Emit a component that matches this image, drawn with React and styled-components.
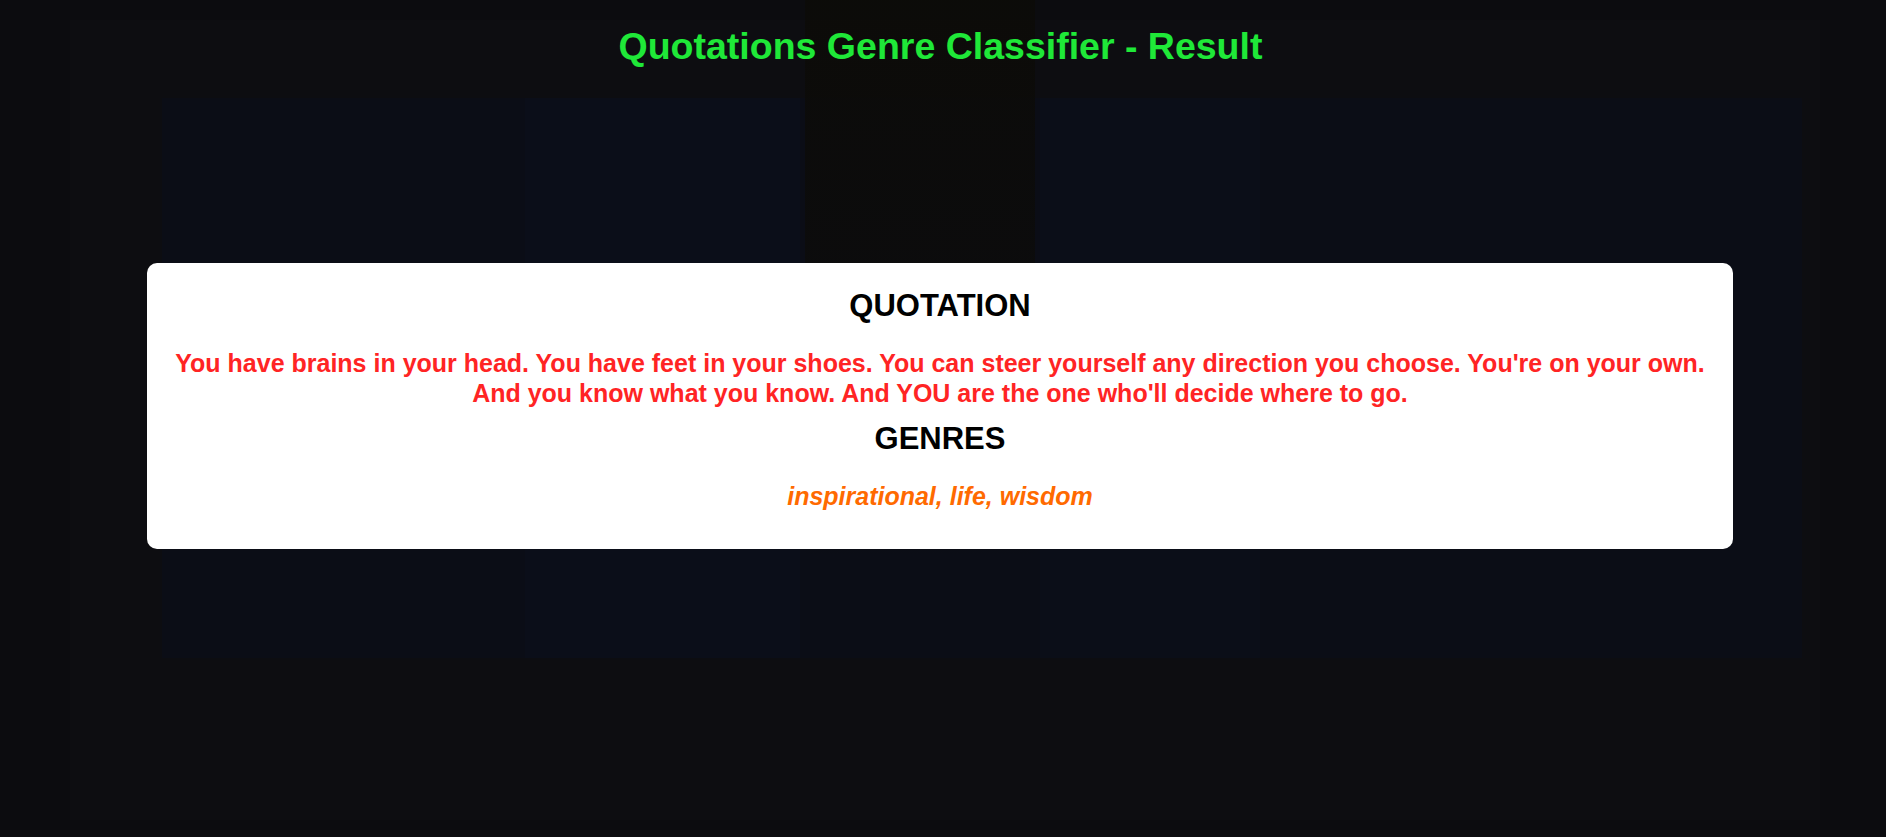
import React from "react";
import styled, { createGlobalStyle } from "styled-components";

const result = {
  quote:
    "You have brains in your head. You have feet in your shoes. You can steer yourself any direction you choose. You're on your own. And you know what you know. And YOU are the one who'll decide where to go.",
  genres: ["inspirational", "life", "wisdom"],
};

const GlobalStyle = createGlobalStyle`
  html, body {
    margin: 0;
    padding: 0;
  }
  body {
    background: #0c0c0f;
    font-family: "Liberation Sans", Arial, sans-serif;
  }
`;

const App = () => {
  return (
    <Page>
      <GlobalStyle />
      <Header>
        <Title>Quotations Genre Classifier - Result</Title>
      </Header>
      <Main>
        <Card>
          <Heading>QUOTATION</Heading>
          <Quote>{result.quote}</Quote>
          <Heading>GENRES</Heading>
          <Genres>{result.genres.join(", ")}</Genres>
        </Card>
      </Main>
    </Page>
  );
};

// blurred backdrop: a few soft blocks over a near-black base
const Page = styled.div`
  min-height: 837px;
  display: flex;
  flex-direction: column;
  background:
    linear-gradient(rgba(12, 11, 8, 0.9), rgba(12, 11, 8, 0.6) 70%, rgba(12, 11, 8, 0)) 805px 0 / 230px 560px no-repeat,
    linear-gradient(#0b0e19, #0b0e19) 525px 98px / 275px 560px no-repeat,
    linear-gradient(#0b0e18, #0b0e18) 1040px 98px / 220px 560px no-repeat,
    linear-gradient(#0b0d16, #0b0d16) 162px 98px / 1640px 560px no-repeat,
    linear-gradient(#0d0d11, #0d0d11) 70px 20px / 1750px 800px no-repeat,
    #0c0c0f;
`;

const Header = styled.header`
  height: 92px;
  display: flex;
  align-items: center;
  justify-content: center;
  padding-right: 5px;
`;

const Title = styled.h1`
  margin: 0;
  color: #1fe838;
  font-size: 37.5px;
  font-weight: 700;
`;

const Main = styled.main`
  display: flex;
  justify-content: center;
  padding-top: 171px;
`;

const Card = styled.section`
  width: 1586px;
  margin-right: 6px;
  box-sizing: border-box;
  background: #ffffff;
  border-radius: 10px;
  padding: 24px 20px 38px;
  text-align: center;
`;

const Heading = styled.h2`
  margin: 0;
  color: #000;
  font-size: 31px;
  font-weight: 700;
  line-height: 37px;
`;

const Quote = styled.p`
  margin: 24px 0 12px;
  color: #ff2424;
  font-size: 25px;
  font-weight: 700;
  line-height: 30px;
`;

const Genres = styled.p`
  margin: 25px 0 0;
  color: #ff6a00;
  font-size: 25px;
  font-weight: 700;
  font-style: italic;
  line-height: 29px;
`;

export default App;
